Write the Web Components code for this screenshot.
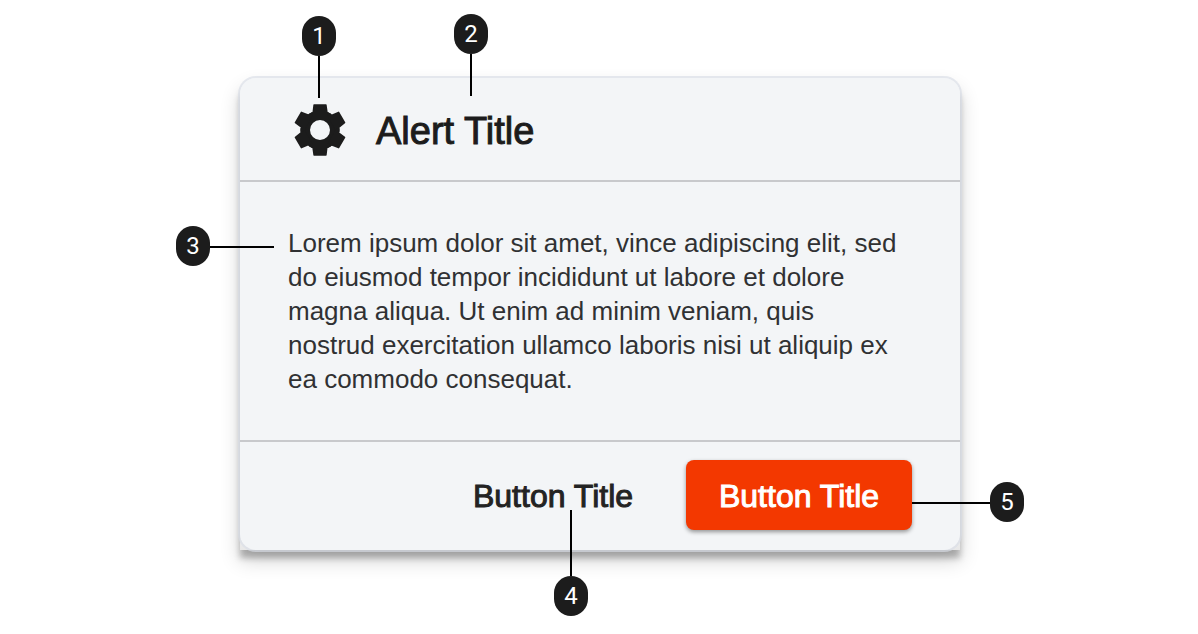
<!DOCTYPE html>
<html lang="en">
<head>
<meta charset="utf-8">
<meta name="viewport" content="width=device-width, initial-scale=1">
<title>Alert anatomy</title>
<style>
  body {
    margin: 0;
    background: #fff;
    color: #1c1c1c;
    font-family: "Liberation Sans", Arial, sans-serif;
  }
  main { padding: 76px 236px 82px 238px; }
  call-out { position: absolute; }
  .c1 { left: 64px; top: -60px; }
  .c2 { left: 216px; top: -62px; }
  .c3 { left: -62px; top: 150px; }
  .c4 { right: 374px; bottom: -64px; }
  .c5 { right: -62px; bottom: 30px; }
</style>
</head>
<body>
<main>
  <anatomy-figure>
    <alert-card>
      <gear-icon slot="icon"></gear-icon>
      <span slot="title">Alert Title</span>
      Lorem ipsum dolor sit amet, vince adipiscing elit, sed do eiusmod tempor incididunt ut labore et dolore magna aliqua. Ut enim ad minim veniam, quis nostrud exercitation ullamco laboris nisi ut aliquip ex ea commodo consequat.
      <alert-button slot="actions">Button Title</alert-button>
      <alert-button slot="actions" primary>Button Title</alert-button>
    </alert-card>
    <call-out slot="notes" class="c1" side="top" style="--reach:42px">1</call-out>
    <call-out slot="notes" class="c2" side="top" style="--reach:42px">2</call-out>
    <call-out slot="notes" class="c3" side="left" style="--reach:64px">3</call-out>
    <call-out slot="notes" class="c4" side="bottom" style="--reach:66px">4</call-out>
    <call-out slot="notes" class="c5" side="right" style="--reach:78px">5</call-out>
  </anatomy-figure>
</main>

<template id="anatomy-figure">
  <style>
    :host { display: block; position: relative; }
  </style>
  <slot></slot>
  <slot name="notes"></slot>
</template>

<template id="call-out">
  <style>
    :host { display: flex; align-items: center; }
    :host([side="top"]) { flex-direction: column; }
    :host([side="bottom"]) { flex-direction: column-reverse; }
    :host([side="right"]) { flex-direction: row-reverse; }
    .pill {
      width: 34px;
      height: 40px;
      border-radius: 17px;
      background: #1c1c1c;
      color: #fff;
      font: 24px/40px Roboto, sans-serif;
      text-align: center;
    }
    .line { background: #000; width: 2px; height: var(--reach); }
    :host([side="left"]) .line,
    :host([side="right"]) .line { width: var(--reach); height: 2px; margin-top: 2px; }
  </style>
  <span class="pill"><slot></slot></span>
  <span class="line"></span>
</template>

<template id="gear-icon">
  <style>
    :host { display: block; width: 52px; height: 52px; }
    svg { display: block; width: 100%; height: 100%; }
  </style>
  <svg viewBox="-78 -78 156 156" fill="currentColor" aria-hidden="true">
    <defs>
      <path id="tooth" d="M-23-50 -20-75Q-20-77-18-77H18Q20-77 20-75L23-54Q28-52 34-47L26-40H-26L-34-47Q-28-52-23-54Z"/>
    </defs>
    <circle r="44" fill="none" stroke="currentColor" stroke-width="28"/>
    <use href="#tooth"/>
    <use href="#tooth" transform="rotate(60)"/>
    <use href="#tooth" transform="rotate(120)"/>
    <use href="#tooth" transform="rotate(180)"/>
    <use href="#tooth" transform="rotate(240)"/>
    <use href="#tooth" transform="rotate(300)"/>
  </svg>
</template>

<template id="alert-button">
  <style>
    :host { display: block; }
    button {
      box-sizing: border-box;
      min-width: 226px;
      height: 70px;
      padding: 2px 32px 0;
      border: 0;
      border-radius: 8px;
      background: transparent;
      color: #232323;
      font: 32px/36px "Liberation Sans", Arial, sans-serif;
      -webkit-text-stroke: 1px currentColor;
      white-space: nowrap;
      cursor: pointer;
    }
    :host([primary]) button {
      background: #f33800;
      color: #fff;
      box-shadow: 0 2px 4px rgba(0, 0, 0, .4);
    }
  </style>
  <button type="button"><slot></slot></button>
</template>

<template id="alert-card">
  <style>
    :host { display: block; padding: 2px; }
    .shade {
      display: flow-root;
      border-radius: 16px 16px 0 0;
      background: linear-gradient(#fff 80%, #e8e8e8);
      box-shadow: 0 8px 6px rgba(0, 0, 0, .26), 0 10px 20px rgba(0, 0, 0, .19);
    }
    .panel {
      margin: -2px;
      border: 2px solid rgba(217, 222, 230, .66);
      border-radius: 18px;
      background: #f3f5f7 padding-box;
    }
    header {
      display: flex;
      align-items: center;
      gap: 30px;
      padding: 26px 54px 24px;
      border-bottom: 2px solid #c8c9cc;
    }
    h2 {
      margin: 0;
      padding-top: 2px;
      font-size: 38px;
      font-weight: 400;
      line-height: 44px;
      -webkit-text-stroke: 1px currentColor;
    }
    p {
      margin: 0;
      padding: 44px 56px 44px 48px;
      color: #303133;
      font-size: 26px;
      line-height: 34px;
    }
    footer {
      display: flex;
      justify-content: flex-end;
      gap: 20px;
      padding: 18px 48px 20px;
      border-top: 2px solid #c8c9cc;
    }
  </style>
  <div class="shade">
    <section class="panel" role="alertdialog" aria-labelledby="title" aria-describedby="text">
      <header><slot name="icon"></slot><h2 id="title"><slot name="title"></slot></h2></header>
      <p id="text"><slot></slot></p>
      <footer><slot name="actions"></slot></footer>
    </section>
  </div>
</template>

<script>
  class TemplateElement extends HTMLElement {
    constructor() {
      super();
      const template = document.getElementById(this.localName);
      this.attachShadow({ mode: "open" }).append(template.content.cloneNode(true));
    }
  }
  customElements.define("anatomy-figure", class extends TemplateElement {});
  customElements.define("call-out", class extends TemplateElement {});
  customElements.define("gear-icon", class extends TemplateElement {});
  customElements.define("alert-button", class extends TemplateElement {});
  customElements.define("alert-card", class extends TemplateElement {});
</script>
</body>
</html>
